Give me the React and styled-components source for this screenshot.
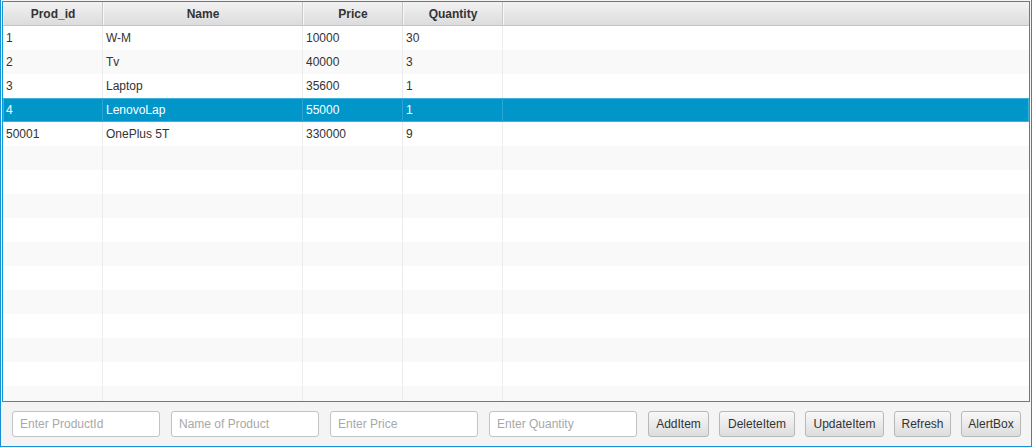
import React from 'react';
import styled, { createGlobalStyle } from 'styled-components';

const GlobalStyle = createGlobalStyle`
  html, body {
    margin: 0;
    padding: 0;
    background: #f4f4f4;
  }
  * {
    box-sizing: border-box;
  }
`;

const Window = styled.div`
  width: 1032px;
  height: 447px;
  display: flex;
  flex-direction: column;
  background: #f4f4f4;
  border-left: 1px solid #1b8fd6;
  border-right: 1px solid #1b8fd6;
  border-bottom: 1px solid #1b8fd6;
  font-family: "Liberation Sans", Arial, sans-serif;
  font-size: 12px;
  color: #333333;
`;

const Table = styled.div`
  height: 401px;
  margin: 1px 1px 0 1px;
  border: 1px solid #0a9bd4;
  background: #ffffff;
  overflow: hidden;
  display: flex;
  flex-direction: column;
`;

const cols = '100px 200px 100px 100px 1fr';

const HeaderRow = styled.div`
  display: grid;
  grid-template-columns: ${cols};
  height: 24px;
  flex: none;
  background: linear-gradient(#f2f2f2, #dcdcdc);
  border-bottom: 1px solid #c4c4c4;
`;

const HeaderCell = styled.div`
  display: flex;
  align-items: center;
  justify-content: center;
  font-weight: bold;
  border-right: 1px solid #c8c8c8;
  border-left: 1px solid #f8f8f8;
  &:last-child {
    border-right: none;
  }
`;

const Row = styled.div`
  display: grid;
  grid-template-columns: ${cols};
  height: 24px;
  flex: none;
  background: ${p => (p.$selected ? '#0096c9' : p.$odd ? '#f9f9f9' : '#ffffff')};
  color: ${p => (p.$selected ? '#ffffff' : '#333333')};
  box-shadow: ${p => (p.$selected ? 'inset 0 0 0 1px #3fb2dc' : 'none')};
`;

const Cell = styled.div`
  display: flex;
  align-items: center;
  padding-left: 3px;
  white-space: nowrap;
  border-right: 1px solid ${p => (p.$selected ? '#2aa4d2' : '#ececec')};
  &:last-child {
    border-right: none;
  }
`;

const Toolbar = styled.div`
  flex: 1;
  display: flex;
  align-items: center;
  padding: 0 0 0 11px;
  gap: 11px;
`;

const Field = styled.input`
  width: 148px;
  height: 26px;
  border: 1px solid #c3c3c3;
  border-radius: 3px;
  background: #ffffff;
  padding: 0 7px;
  font-family: inherit;
  font-size: 12px;
  color: #333333;
  outline: none;
  &::placeholder {
    color: #a8a8a8;
  }
`;

const Buttons = styled.div`
  display: flex;
  gap: 10px;
`;

const Button = styled.button`
  width: ${p => p.$w}px;
  height: 26px;
  padding: 0;
  border: 1px solid #b8b8b8;
  border-radius: 3px;
  background: linear-gradient(#f8f8f8, #dddddd);
  font-family: inherit;
  font-size: 12px;
  color: #333333;
  cursor: pointer;
`;

const products = [
  { id: '1', name: 'W-M', price: '10000', qty: '30' },
  { id: '2', name: 'Tv', price: '40000', qty: '3' },
  { id: '3', name: 'Laptop', price: '35600', qty: '1' },
  { id: '4', name: 'LenovoLap', price: '55000', qty: '1' },
  { id: '50001', name: 'OnePlus 5T', price: '330000', qty: '9' },
];

const actions = [
  { label: 'AddItem', w: 61 },
  { label: 'DeleteItem', w: 76 },
  { label: 'UpdateItem', w: 79 },
  { label: 'Refresh', w: 57 },
  { label: 'AlertBox', w: 60 },
];

export default function App() {
  const rows = [];
  for (let i = 0; i < 16; i++) {
    const p = products[i];
    const selected = i === 3;
    rows.push(
      <Row key={i} $odd={i % 2 === 1} $selected={selected}>
        <Cell $selected={selected}>{p ? p.id : ''}</Cell>
        <Cell $selected={selected}>{p ? p.name : ''}</Cell>
        <Cell $selected={selected}>{p ? p.price : ''}</Cell>
        <Cell $selected={selected}>{p ? p.qty : ''}</Cell>
        <Cell $selected={selected} />
      </Row>
    );
  }

  return (
    <Window>
      <GlobalStyle />
      <Table>
        <HeaderRow>
          <HeaderCell>Prod_id</HeaderCell>
          <HeaderCell>Name</HeaderCell>
          <HeaderCell>Price</HeaderCell>
          <HeaderCell>Quantity</HeaderCell>
          <HeaderCell />
        </HeaderRow>
        {rows}
      </Table>
      <Toolbar>
        <Field placeholder="Enter ProductId" />
        <Field placeholder="Name of Product" />
        <Field placeholder="Enter Price" />
        <Field placeholder="Enter Quantity" />
        <Buttons>
          {actions.map(a => (
            <Button key={a.label} $w={a.w}>{a.label}</Button>
          ))}
        </Buttons>
      </Toolbar>
    </Window>
  );
}
